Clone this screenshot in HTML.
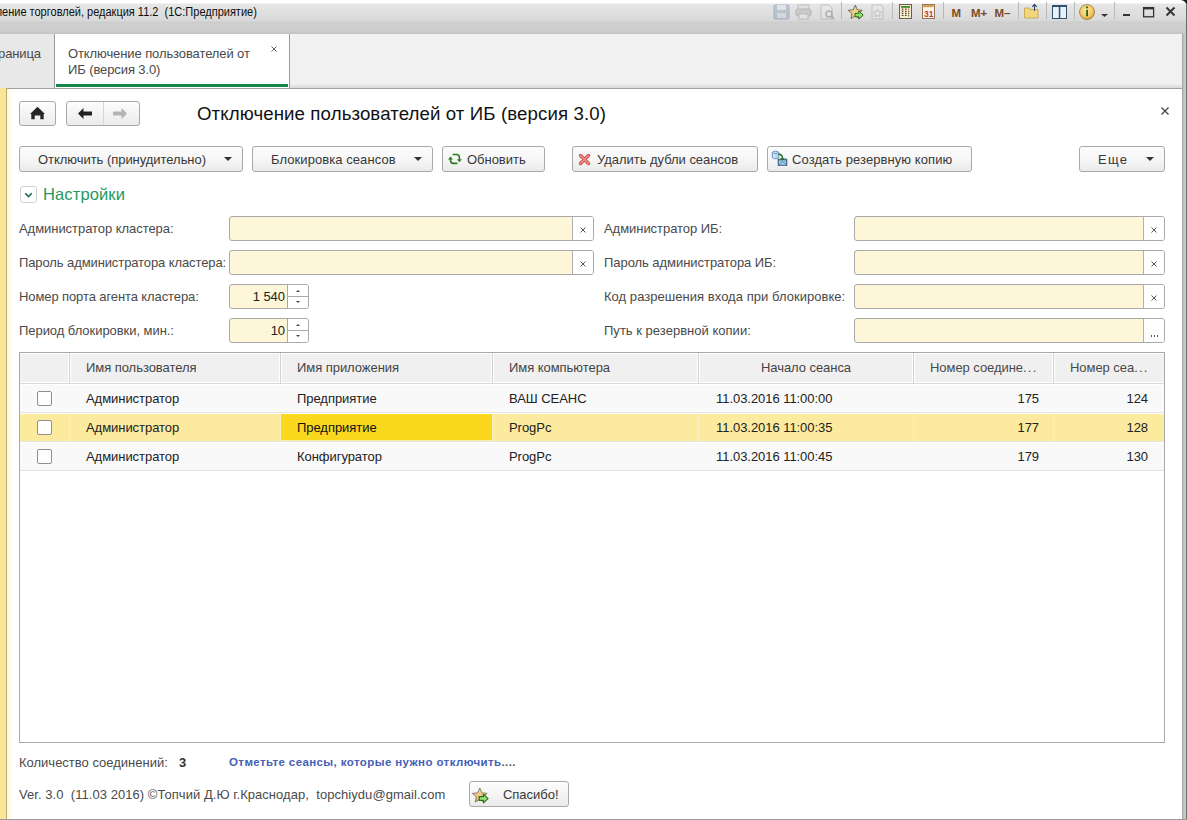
<!DOCTYPE html>
<html><head><meta charset="utf-8">
<style>
*{box-sizing:border-box;margin:0;padding:0}
html,body{width:1187px;height:820px;overflow:hidden;background:#fff;font-family:"Liberation Sans",sans-serif;color:#333;position:relative}
.a{position:absolute}
.t{position:absolute;white-space:nowrap;font-size:13px;line-height:15px;color:#4a4a4a;letter-spacing:-0.05px}
.bt{letter-spacing:-0.03px;color:#383838}
.btn{position:absolute;height:26px;top:146px;border:1px solid #a9a9a9;border-radius:3px;background:linear-gradient(#fdfdfd,#f6f6f6 50%,#ebebeb)}
.inp{position:absolute;height:25px;border:1px solid #a9a9a9;border-radius:3px;background:#fdf6d8;overflow:hidden}
.clr{position:absolute;right:0;top:0;bottom:0;width:21px;border-left:1px solid #b0b0b0;background:#fff}
.clr svg{position:absolute;left:7px;top:10px}
.spn{position:absolute;right:0;top:0;bottom:0;width:21px;border-left:1px solid #a9a9a9;background:#fff}
.tri{position:absolute;width:0;height:0;border-left:4px solid transparent;border-right:4px solid transparent;border-top:4px solid #333}
.sep{position:absolute;top:7px;width:1px;height:14px;background:#b0b0b0;box-shadow:1px 0 0 #f4f4f4}
.hd{position:absolute;top:353px;height:30px;background:#f0f0f0;border:1px solid #fff;border-top:1px solid #fff}
.cs{position:absolute;width:1px;background:#cfcfcf}
.row{position:absolute;left:20px;width:1144px;height:29px;border-bottom:1px solid #e4e4e4;box-shadow:inset 0 1px 0 #fff}
.cb{position:absolute;left:37px;width:15px;height:15px;border:1px solid #8f8f8f;border-radius:2px;background:#fff}
</style></head><body>
<!-- title bar -->
<div class="a" style="left:0;top:0;width:1187px;height:34px;background:linear-gradient(#fff 0,#fff 3px,#e6e6e6 4px,#dadada 20px,#cfcfcf 22px,#cccccc 32px,#c4c4c4 33px)"></div>
<div class="t" style="right:930px;top:5px;font-size:12px;line-height:14px;color:#0e0e0e;letter-spacing:0;transform:scaleX(0.917);transform-origin:100% 0">ление торговлей, редакция 11.2&nbsp; (1С:Предприятие)</div>

<!-- title bar icons -->
<svg class="a" style="left:760px;top:0" width="427" height="34" viewBox="760 0 427 34">
 <!-- floppy disabled -->
 <g opacity="0.45">
  <rect x="774" y="5" width="15" height="14" rx="1" fill="#8aa0b8" stroke="#6a7f96"/>
  <rect x="777" y="5" width="9" height="5" fill="#dde4ea"/>
  <rect x="777" y="13" width="9" height="5" fill="#c8d0d8"/>
 </g>
 <g opacity="0.4">
  <rect x="798" y="5" width="11" height="5" fill="#ddd" stroke="#888"/>
  <rect x="796" y="9" width="15" height="7" rx="2" fill="#aaa" stroke="#777"/>
  <rect x="799" y="14" width="9" height="5" fill="#eee" stroke="#888"/>
 </g>
 <g opacity="0.4">
  <path d="M821 5h8l3 3v11h-11z" fill="#eee" stroke="#888"/>
  <circle cx="829" cy="14" r="3" fill="none" stroke="#666" stroke-width="1.5"/>
  <path d="M831 16l3 3" stroke="#666" stroke-width="2"/>
 </g>
 <rect x="841" y="2" width="1" height="17" fill="#b8b8b8"/>
 <path d="M855.30,5.20 L857.30,9.85 L862.34,10.31 L858.53,13.65 L859.65,18.59 L855.30,16.00 L850.95,18.59 L852.07,13.65 L848.26,10.31 L853.30,9.85Z" fill="#f3d58a" stroke="#6a6050" stroke-width="0.9" stroke-linejoin="round"/>
 <path d="M855 13.3h3.8v-2.3l4.4 4.1-4.4 4v-2.3h-3.8z" fill="#8ede6a" stroke="#2a6a18" stroke-width="1" stroke-linejoin="round"/>
 <g opacity="0.35">
  <path d="M872 5h9l2 2v12h-11z" fill="#eee" stroke="#888"/>
  <path d="M877.5 9l1.3 2.6 2.8.4-2 2 .5 2.8-2.6-1.4-2.6 1.4.5-2.8-2-2 2.8-.4z" fill="none" stroke="#777" stroke-width="0.8"/>
 </g>
 <rect x="892" y="2" width="1" height="17" fill="#b8b8b8"/>
 <rect x="899.5" y="4.5" width="12" height="14" fill="#fbecd0" stroke="#5a5040" stroke-width="0.9"/>
 <rect x="901" y="6" width="9" height="1.8" fill="#3a8a2a"/>
 <g fill="#3a3028">
  <rect x="901.8" y="8.6" width="1.6" height="1.1"/><rect x="905" y="8.6" width="1.6" height="1.1"/><rect x="908.1" y="8.6" width="1.2" height="1.1" fill="#c04040"/>
  <rect x="901.8" y="10.7" width="1.6" height="1.1"/><rect x="905" y="10.7" width="1.6" height="1.1"/><rect x="908.1" y="10.7" width="1.2" height="1.1"/>
  <rect x="901.8" y="12.8" width="1.6" height="1.1"/><rect x="905" y="12.8" width="1.6" height="1.1"/><rect x="908.1" y="12.8" width="1.2" height="1.1"/>
  <rect x="901.8" y="14.9" width="1.6" height="1.1"/><rect x="905" y="14.9" width="1.6" height="1.1"/><rect x="908.1" y="14.9" width="1.2" height="1.6" fill="#3a8a2a"/>
 </g>
 <rect x="922.5" y="4.5" width="12" height="14" fill="#fff4ea" stroke="#8a6a50" stroke-width="0.9"/>
 <rect x="923" y="5" width="11" height="2.2" fill="#f2b060"/>
 <g fill="#6a4020"><rect x="924.5" y="5.6" width="1" height="1"/><rect x="927.5" y="5.6" width="1" height="1"/><rect x="930.5" y="5.6" width="1" height="1"/></g>
 <text x="928.7" y="16.8" font-family="Liberation Sans" font-weight="bold" font-size="8.5" fill="#c83a2a" text-anchor="middle">31</text>
 <rect x="943" y="2" width="1" height="17" fill="#b8b8b8"/>
 <text x="951.5" y="17" font-family="Liberation Sans" font-weight="bold" font-size="11.5" fill="#7d4a24">M</text>
 <text x="971" y="17" font-family="Liberation Sans" font-weight="bold" font-size="11.5" fill="#7d4a24">M+</text>
 <text x="994.5" y="17" font-family="Liberation Sans" font-weight="bold" font-size="11.5" fill="#7d4a24">M–</text>
 <rect x="1018" y="2" width="1" height="17" fill="#b8b8b8"/>
 <path d="M1024.5 8h5l1 1.5h7.5v8.5h-13.5z" fill="#f2d77a" stroke="#c0a04a" stroke-width="0.8"/>
 <path d="M1034.5 11v-6.5M1032.3 6.8l2.2-2.5 2.2 2.5" stroke="#2a4a6a" stroke-width="1.1" fill="none"/>
 <rect x="1046" y="2" width="1" height="17" fill="#b8b8b8"/>
 <rect x="1052.5" y="5.5" width="14" height="13" fill="#e8f0f8" stroke="#30506e" stroke-width="1"/>
 <rect x="1052" y="5" width="15" height="2" fill="#30506e"/>
 <rect x="1058.8" y="6" width="1.5" height="12.5" fill="#30506e"/>
 <defs><radialGradient id="ig" cx="0.45" cy="0.4" r="0.6"><stop offset="0" stop-color="#fbe8a8"/><stop offset="0.7" stop-color="#f2c860"/><stop offset="1" stop-color="#d89a30"/></radialGradient></defs>
 <circle cx="1087" cy="12" r="7.5" fill="url(#ig)" stroke="#9a7a40" stroke-width="0.8"/>
 <rect x="1086.1" y="9.8" width="1.9" height="6.5" fill="#2f6a1a"/>
 <circle cx="1087" cy="7.4" r="1.1" fill="#2f6a1a"/>
 <rect x="1074" y="2" width="1" height="17" fill="#b8b8b8"/>
 <path d="M1101 14h7l-3.5 3z" fill="#333"/>
 <rect x="1114" y="2" width="1" height="17" fill="#b8b8b8"/>
 <rect x="1123" y="14" width="7" height="2" fill="#333"/>
 <rect x="1143.6" y="7.6" width="10" height="9.2" fill="none" stroke="#333" stroke-width="1.3"/><rect x="1143" y="7" width="11" height="2.4" fill="#333"/>
 <path d="M1166.5 7.5l8 8M1174.5 7.5l-8 8" stroke="#333" stroke-width="1.9"/>
 <path d="M1181 0h6v6q-1-5-6-6z" fill="#222"/>
 <rect x="1186" y="5" width="1" height="29" fill="#6a6a6a"/>
</svg>

<!-- tab bar -->
<div class="a" style="left:0;top:34px;width:1182px;height:54px;background:linear-gradient(#f1f1f1 0,#f1f1f1 50px,#dcdcdc 53px)"></div>
<div class="a" style="left:0;top:34px;width:55px;height:54px;background:#e8e8e8;border-right:1px solid #9a9a9a"></div>
<div class="t" style="left:-2px;top:46px;letter-spacing:-0.1px">раница</div>
<div class="a" style="left:55px;top:34px;width:235px;height:54px;background:#fff;border-right:1px solid #9a9a9a"></div>
<div class="a" style="left:56px;top:84px;width:232px;height:3px;background:#13884a"></div>
<div class="t" style="left:68px;top:46px;letter-spacing:-0.1px">Отключение пользователей от</div>
<div class="t" style="left:68px;top:62px;letter-spacing:-0.1px">ИБ (версия 3.0)</div>
<svg class="a" style="left:271px;top:46px" width="6" height="6"><path d="M0.5 0.5l5 5M5.5 0.5l-5 5" stroke="#666" stroke-width="1"/></svg>
<div class="a" style="left:0;top:88px;width:1182px;height:1px;background:#a0a0a0"></div>

<!-- content frame -->
<div class="a" style="left:0;top:88px;width:6px;height:732px;background:#fbe698"></div>
<div class="a" style="left:6px;top:88px;width:1px;height:732px;background:#b9ad80"></div>
<div class="a" style="left:7px;top:89px;width:6px;height:731px;background:linear-gradient(90deg,#fffbd6,#fff)"></div>
<div class="a" style="left:1182px;top:34px;width:5px;height:786px;background:linear-gradient(90deg,#a6a6a6 0,#b4b4b4 1px,#c6c6c6 2px,#cacaca 4px,#707070 4px)"></div>
<div class="a" style="left:0;top:819px;width:1187px;height:1px;background:#9a9a9a"></div>

<!-- nav buttons -->
<div class="a" style="left:19px;top:101px;width:37px;height:25px;border:1px solid #a9a9a9;border-radius:3px;background:linear-gradient(#fdfdfd,#ebebeb)"></div>
<svg class="a" style="left:30px;top:106px" width="16" height="14" viewBox="0 0 16 14"><path d="M7.5 0.8L0 8H1.3V13.2H4.7V9.4H10.3V13.2H13.7V8H15z" fill="#262626"/></svg>
<div class="a" style="left:66px;top:101px;width:74px;height:25px;border:1px solid #a9a9a9;border-radius:3px;background:linear-gradient(#fdfdfd,#ebebeb)"></div>
<div class="a" style="left:103px;top:102px;width:1px;height:23px;background:#d6d6d6"></div>
<svg class="a" style="left:77px;top:107px" width="16" height="13" viewBox="0 0 16 13"><path d="M1 6.5L6.5 1v3.5h8.5v4h-8.5v3.5z" fill="#222"/></svg>
<svg class="a" style="left:112px;top:107px" width="16" height="13" viewBox="0 0 16 13"><path d="M15 6.5L9.5 1v3.5h-8.5v4h8.5v3.5z" fill="#b4b4b4"/></svg>

<!-- page title -->
<div class="t" style="left:197px;top:103px;font-size:18.67px;line-height:22px;color:#111;letter-spacing:0.1px">Отключение пользователей от ИБ (версия 3.0)</div>
<svg class="a" style="left:1161px;top:107px" width="8" height="8"><path d="M0.5 0.5l7 7M7.5 0.5l-7 7" stroke="#444" stroke-width="1.3"/></svg>

<!-- toolbar -->
<div class="btn" style="left:19px;width:224px"></div>
<div class="t bt" style="left:38px;top:152px;letter-spacing:-0.04px">Отключить (принудительно)</div>
<div class="tri" style="left:224px;top:157px"></div>
<div class="btn" style="left:252px;width:181px"></div>
<div class="t bt" style="left:271px;top:152px;letter-spacing:0.07px">Блокировка сеансов</div>
<div class="tri" style="left:414px;top:157px"></div>
<div class="btn" style="left:442px;width:103px"></div>
<svg class="a" style="left:444px;top:149px" width="22" height="20" viewBox="0 0 22 20">
 <path d="M8.5 5.5H12.5Q15.4 5.5 15.4 8.5V10.5" fill="none" stroke="#2f7a22" stroke-width="1.6"/>
 <path d="M12.9 10.2H17.9L15.4 13.2z" fill="#2f7a22"/>
 <path d="M6.5 10V11.5Q6.5 14.4 9.5 14.4H13.5" fill="none" stroke="#2f7a22" stroke-width="1.6"/>
 <path d="M4 10.6H9L6.5 7.4z" fill="#2f7a22"/>
</svg>
<div class="t bt" style="left:467px;top:152px">Обновить</div>
<div class="btn" style="left:572px;width:186px"></div>
<svg class="a" style="left:572px;top:148px" width="24" height="22" viewBox="0 0 24 22">
 <path d="M8.5 7.5l8 8M16.5 7.5l-8 8" stroke="#c85050" stroke-width="3.4" stroke-linecap="round"/>
 <path d="M8.5 7.5l8 8M16.5 7.5l-8 8" stroke="#f59080" stroke-width="1.6" stroke-linecap="round"/>
</svg>
<div class="t bt" style="left:597px;top:152px">Удалить дубли сеансов</div>
<div class="btn" style="left:767px;width:205px"></div>
<svg class="a" style="left:768px;top:146px" width="24" height="24" viewBox="0 0 24 24">
 <path d="M4.3 6.3v5.3c0 .6 1.4 1.1 3.2 1.1s3.2-.5 3.2-1.1v-5.3" fill="#b6d6f2" stroke="#5a86b4" stroke-width="0.9"/>
 <ellipse cx="7.5" cy="6.3" rx="3.2" ry="1.1" fill="#d8eaf8" stroke="#5a86b4" stroke-width="0.9"/>
 <path d="M6 7.8v4" stroke="#f4faff" stroke-width="1"/>
 <path d="M10.3 13.2h8.4v6.1h-8.4z" fill="#aad4f4" stroke="#2d5a80" stroke-width="1.1"/>
 <path d="M10.5 13.5l4.2 3.2 4.2-3.2M10.5 19l3-2.4M18.8 19l-3-2.4" fill="none" stroke="#3d6a90" stroke-width="0.7"/>
 <path d="M10.5 8.3q4 0 4 4" fill="none" stroke="#256a20" stroke-width="1.5"/>
 <path d="M12 12.2h5l-2.5 2.8z" fill="#256a20"/>
</svg>
<div class="t bt" style="left:792px;top:152px;letter-spacing:0.08px">Создать резервную копию</div>
<div class="btn" style="left:1079px;width:86px"></div>
<div class="t bt" style="left:1098px;top:152px;letter-spacing:1.3px">Еще</div>
<div class="tri" style="left:1146px;top:157px"></div>

<!-- group -->
<div class="a" style="left:20px;top:186px;width:17px;height:17px;border:1px solid #d2d2d2;border-radius:3px;background:#fff"></div>
<svg class="a" style="left:24px;top:192px" width="9" height="6" viewBox="0 0 9 6"><path d="M1.2 1.2l3.3 3.3 3.3-3.3" fill="none" stroke="#1a6e4e" stroke-width="1.6"/></svg>
<div class="t" style="left:43px;top:185px;font-size:16.5px;line-height:18px;color:#1f995e;letter-spacing:0.12px">Настройки</div>

<!-- form -->
<div class="t" style="left:19px;top:221px">Администратор кластера:</div>
<div class="t" style="left:19px;top:255px;letter-spacing:-0.1px">Пароль администратора кластера:</div>
<div class="t" style="left:19px;top:289px;letter-spacing:-0.1px">Номер порта агента кластера:</div>
<div class="t" style="left:19px;top:323px">Период блокировки, мин.:</div>
<div class="inp" style="left:229px;top:216px;width:365px"><div class="clr"><svg width="6" height="6"><path d="M0.5 0.5l5 5M5.5 0.5l-5 5" stroke="#555" stroke-width="1"/></svg></div></div>
<div class="inp" style="left:229px;top:250px;width:365px"><div class="clr"><svg width="6" height="6"><path d="M0.5 0.5l5 5M5.5 0.5l-5 5" stroke="#555" stroke-width="1"/></svg></div></div>
<div class="inp" style="left:229px;top:284px;width:80px"><div class="spn"><div class="a" style="left:0;top:11px;width:20px;height:1px;background:#a9a9a9"></div><div class="a" style="left:8px;top:5px;border-left:2px solid transparent;border-right:2px solid transparent;border-bottom:2px solid #444"></div><div class="a" style="left:8px;top:16px;border-left:2px solid transparent;border-right:2px solid transparent;border-top:2px solid #444"></div></div></div>
<div class="t" style="left:230px;width:55px;text-align:right;top:289px;color:#222">1 540</div>
<div class="inp" style="left:229px;top:318px;width:80px"><div class="spn"><div class="a" style="left:0;top:11px;width:20px;height:1px;background:#a9a9a9"></div><div class="a" style="left:8px;top:5px;border-left:2px solid transparent;border-right:2px solid transparent;border-bottom:2px solid #444"></div><div class="a" style="left:8px;top:16px;border-left:2px solid transparent;border-right:2px solid transparent;border-top:2px solid #444"></div></div></div>
<div class="t" style="left:230px;width:55px;text-align:right;top:323px;color:#222">10</div>
<div class="t" style="left:604px;top:221px">Администратор ИБ:</div>
<div class="t" style="left:604px;top:255px">Пароль администратора ИБ:</div>
<div class="t" style="left:604px;top:289px;letter-spacing:0.04px">Код разрешения входа при блокировке:</div>
<div class="t" style="left:604px;top:323px;letter-spacing:0.02px">Путь к резервной копии:</div>
<div class="inp" style="left:854px;top:216px;width:311px"><div class="clr"><svg width="6" height="6"><path d="M0.5 0.5l5 5M5.5 0.5l-5 5" stroke="#555" stroke-width="1"/></svg></div></div>
<div class="inp" style="left:854px;top:250px;width:311px"><div class="clr"><svg width="6" height="6"><path d="M0.5 0.5l5 5M5.5 0.5l-5 5" stroke="#555" stroke-width="1"/></svg></div></div>
<div class="inp" style="left:854px;top:284px;width:311px"><div class="clr"><svg width="6" height="6"><path d="M0.5 0.5l5 5M5.5 0.5l-5 5" stroke="#555" stroke-width="1"/></svg></div></div>
<div class="inp" style="left:854px;top:318px;width:311px"><div class="clr"><div class="a" style="left:6px;top:16px;width:9px;height:2px;background:radial-gradient(circle,#555 0.7px,transparent 1px) 0 0/3px 2px"></div></div></div>

<!-- table -->
<div class="a" style="left:19px;top:352px;width:1146px;height:391px;border:1px solid #a9a9a9;background:#fff"></div>
<div class="a" style="left:20px;top:353px;width:1144px;height:30px;background:#f0f0f0;box-shadow:inset 0 1px 0 #fff,inset 0 -1px 0 #fff"></div>
<div class="a" style="left:20px;top:383px;width:1144px;height:1px;background:#dadada"></div>
<!-- col separators header -->
<div class="cs" style="left:69px;top:353px;height:30px;box-shadow:-1px 0 0 #fff,1px 0 0 #fff"></div>
<div class="cs" style="left:280px;top:353px;height:30px;box-shadow:-1px 0 0 #fff,1px 0 0 #fff"></div>
<div class="cs" style="left:492px;top:353px;height:30px;box-shadow:-1px 0 0 #fff,1px 0 0 #fff"></div>
<div class="cs" style="left:698px;top:353px;height:30px;box-shadow:-1px 0 0 #fff,1px 0 0 #fff"></div>
<div class="cs" style="left:913px;top:353px;height:30px;box-shadow:-1px 0 0 #fff,1px 0 0 #fff"></div>
<div class="cs" style="left:1053px;top:353px;height:30px;box-shadow:-1px 0 0 #fff,1px 0 0 #fff"></div>
<div class="t" style="left:86px;top:360px;color:#444">Имя пользователя</div>
<div class="t" style="left:297px;top:360px;color:#444">Имя приложения</div>
<div class="t" style="left:509px;top:360px;color:#444">Имя компьютера</div>
<div class="t" style="left:699px;width:214px;text-align:center;top:360px;color:#444">Начало сеанса</div>
<div class="t" style="left:930px;top:360px;color:#4a4a4a">Номер соедине<span style="letter-spacing:1.2px">...</span></div>
<div class="t" style="left:1070px;top:360px;color:#4a4a4a">Номер сеа<span style="letter-spacing:1.2px">...</span></div>

<!-- rows -->
<div class="row" style="top:384px;background:#f9f9f9"></div>
<div class="row" style="top:413px;background:#fcea9e"></div>
<div class="row" style="top:442px;background:#f9f9f9"></div>
<div class="a" style="left:69px;top:413px;width:1px;height:28px;background:#fdf0c0"></div>
<div class="a" style="left:280px;top:413px;width:1px;height:28px;background:#fdf0c0"></div>
<div class="a" style="left:492px;top:413px;width:1px;height:28px;background:#fdf0c0"></div>
<div class="a" style="left:698px;top:413px;width:1px;height:28px;background:#fdf0c0"></div>
<div class="a" style="left:913px;top:413px;width:1px;height:28px;background:#fdf0c0"></div>
<div class="a" style="left:1053px;top:413px;width:1px;height:28px;background:#fdf0c0"></div>
<div class="a" style="left:281px;top:414px;width:211px;height:26px;background:#f9d81e"></div>
<div class="cb" style="top:391px"></div>
<div class="cb" style="top:420px"></div>
<div class="cb" style="top:449px"></div>

<div class="t" style="left:86px;top:391px;color:#222">Администратор</div>
<div class="t" style="left:297px;top:391px;color:#222">Предприятие</div>
<div class="t" style="left:509px;top:391px;color:#222">ВАШ СЕАНС</div>
<div class="t" style="left:716px;top:391px;color:#222">11.03.2016 11:00:00</div>
<div class="t" style="left:914px;width:125px;text-align:right;top:391px;color:#222">175</div>
<div class="t" style="left:1054px;width:94px;text-align:right;top:391px;color:#222">124</div>

<div class="t" style="left:86px;top:420px;color:#222">Администратор</div>
<div class="t" style="left:297px;top:420px;color:#111">Предприятие</div>
<div class="t" style="left:509px;top:420px;color:#222">ProgPc</div>
<div class="t" style="left:716px;top:420px;color:#222">11.03.2016 11:00:35</div>
<div class="t" style="left:914px;width:125px;text-align:right;top:420px;color:#222">177</div>
<div class="t" style="left:1054px;width:94px;text-align:right;top:420px;color:#222">128</div>

<div class="t" style="left:86px;top:449px;color:#222">Администратор</div>
<div class="t" style="left:297px;top:449px;color:#222">Конфигуратор</div>
<div class="t" style="left:509px;top:449px;color:#222">ProgPc</div>
<div class="t" style="left:716px;top:449px;color:#222">11.03.2016 11:00:45</div>
<div class="t" style="left:914px;width:125px;text-align:right;top:449px;color:#222">179</div>
<div class="t" style="left:1054px;width:94px;text-align:right;top:449px;color:#222">130</div>

<!-- footer -->
<div class="t" style="left:19px;top:755px;letter-spacing:0">Количество соединений:</div>
<div class="t" style="left:179px;top:755px;font-weight:bold;font-size:13px;color:#333">3</div>
<div class="t" style="left:229px;top:756px;font-weight:bold;font-size:11.5px;line-height:13px;color:#4561b6;letter-spacing:0.4px">Отметьте сеансы, которые нужно отключить<span style="color:#555">....</span></div>
<div class="t" style="left:19px;top:787px;letter-spacing:0.05px">Ver. 3.0&nbsp; (11.03 2016) ©Топчий Д.Ю г.Краснодар,&nbsp; topchiydu@gmail.com</div>
<div class="a" style="left:469px;top:781px;width:100px;height:26px;border:1px solid #a9a9a9;border-radius:3px;background:linear-gradient(#fdfdfd,#ebebeb)"></div>
<svg class="a" style="left:466px;top:778px" width="34" height="32" viewBox="0 0 34 32">
 <defs><linearGradient id="sg" x1="0" y1="0" x2="0" y2="1"><stop offset="0" stop-color="#f8e0a8"/><stop offset="1" stop-color="#eab060"/></linearGradient></defs>
 <path d="M13.80,10.10 L15.92,14.89 L21.12,15.42 L17.23,18.92 L18.33,24.03 L13.80,21.40 L9.27,24.03 L10.37,18.92 L6.48,15.42 L11.68,14.89Z" fill="url(#sg)" stroke="#7a7060" stroke-width="0.9" stroke-linejoin="round"/>
 <path d="M13.2 18.6h4.2v-2.4l4.6 4.4-4.6 4.2v-2.4h-4.2z" fill="#98e27a" stroke="#2a6a18" stroke-width="1.1" stroke-linejoin="round"/>
</svg>
<div class="t bt" style="left:503px;top:787px">Спасибо!</div>
</body></html>
